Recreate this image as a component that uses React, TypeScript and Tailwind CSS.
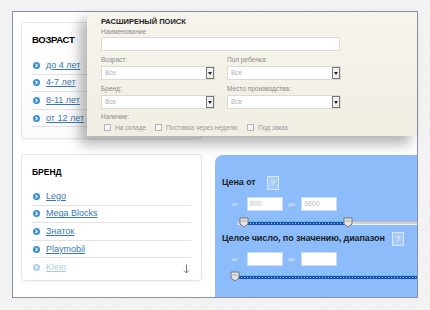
import React from "react";

const font = { fontFamily: '"Liberation Sans", Arial, sans-serif' };

function Bullet() {
  return (
    <svg width="7" height="7" viewBox="0 0 7 7">
      <circle cx="3.5" cy="3.5" r="3.5" fill="#3b8fd3" />
      <path d="M2.6 1.9 L4.3 3.5 L2.6 5.1" stroke="#fff" strokeWidth="1.1" fill="none" />
    </svg>
  );
}

function LinkRow({ text, faded, last }: { text: string; faded?: boolean; last?: boolean }) {
  return (
    <div
      className={`flex items-center h-[17.6px] gap-[6px] pl-[1px] ${last ? "" : "border-b border-[#e2e2e2]"} ${faded ? "opacity-40" : ""}`}
    >
      <Bullet />
      <span className="text-[9px] text-[#3a78b5] underline leading-none">{text}</span>
    </div>
  );
}

function Select({ w }: { w: string }) {
  return (
    <div className={`${w} h-[14px] bg-white border border-[#dcdad2] flex items-center justify-between`}>
      <span className="text-[6.5px] text-[#b0b0b0] pl-[3px]">Все</span>
      <div className="w-[8px] h-[12px] bg-[#f0f0f0] border border-[#777] flex items-center justify-center">
        <svg width="4" height="3" viewBox="0 0 4 3">
          <path d="M0 0 H4 L2 3 Z" fill="#222" />
        </svg>
      </div>
    </div>
  );
}

function Check({ label }: { label: string }) {
  return (
    <div className="flex items-center gap-[4px]">
      <div className="w-[7px] h-[7px] border border-[#b5b5b5] bg-[#f6f6f6]" />
      <span className="text-[6.5px] text-[#999]">{label}</span>
    </div>
  );
}

function Thumb({ left }: { left: number }) {
  return (
    <svg
      width="10"
      height="11"
      viewBox="0 0 10 11"
      className="absolute top-[-1px]"
      style={{ left: left - 5 }}
    >
      <path d="M1 1 H9 V7 L5 10 L1 7 Z" fill="#e4e4e4" stroke="#777" strokeWidth="1" />
      <path d="M2.5 4 H7.5" stroke="#999" strokeWidth="0.8" />
    </svg>
  );
}

function Slider({ start, a, b }: { start: number; a: number; b: number }) {
  return (
    <div className="relative h-[10px]">
      <div
        className="absolute top-[3px] h-[4px] right-[-40px] bg-[#d2d2d2] border-t border-b border-t-[#b9b9b9] border-b-[#eeeeee] rounded-l-[2px]"
        style={{ left: start }}
      />
      <div
        className="absolute top-[3px] h-[4px] bg-[#1f4fb5] border-t border-[#63c0d8]"
        style={{ left: a, width: b - a }}
      >
        <div className="h-[1px] mt-[1px] bg-[repeating-linear-gradient(90deg,#7fd0e6_0,#7fd0e6_1px,transparent_1px,transparent_3px)]" />
      </div>
      <Thumb left={a} />
      {b < 190 && <Thumb left={b} />}
    </div>
  );
}

function RangeInputs({ from, to }: { from: string; to: string }) {
  return (
    <div className="flex items-center h-[14px] pl-[10px]">
      <span className="text-[6px] text-[#e6effc] w-[15px]">от</span>
      <div className="w-[36px] h-[14px] bg-white border border-[#c9dcf5] flex items-center pl-[2px]">
        <span className="text-[7px] text-[#bbb]">{from}</span>
      </div>
      <span className="text-[6px] text-[#e6effc] w-[18px] pl-[5px]">до</span>
      <div className="w-[36px] h-[14px] bg-white border border-[#c9dcf5] flex items-center pl-[2px]">
        <span className="text-[7px] text-[#bbb]">{to}</span>
      </div>
    </div>
  );
}

function Help() {
  return (
    <div className="w-[12px] h-[14px] border border-[#d8e8ff] bg-[#a6cbfb] flex items-center justify-center">
      <span className="text-[8px] text-white leading-none">?</span>
    </div>
  );
}

export default function App() {
  return (
    <div
      className="w-[430px] h-[310px] overflow-hidden bg-[repeating-linear-gradient(135deg,#f4f4f4_0,#f4f4f4_2px,#efefef_2px,#efefef_3px)] pt-[11px] pl-[12px]"
      style={font}
    >
      <div className="relative w-[406px] h-[287px] border border-[#8a8fae] bg-white flex">
        {/* Left column */}
        <div className="flex flex-col pl-[8px] pt-[10px] gap-[15px] w-[189px]">
          <div className="h-[117px] rounded-[4px] border border-[#e6e6e6] bg-[linear-gradient(#ffffff,#fbfbfb)] shadow-[0_1px_2px_rgba(0,0,0,0.06)] px-[10px] pt-[11px]">
            <div className="text-[9.5px] font-bold text-black leading-[12px] tracking-[-0.3px]">ВОЗРАСТ</div>
            <div className="mt-[11px] w-[159px]">
              <LinkRow text="до 4 лет" />
              <LinkRow text="4-7 лет" />
              <LinkRow text="8-11 лет" />
              <LinkRow text="от 12 лет" />
            </div>
          </div>
          <div className="relative h-[127px] rounded-[4px] border border-[#e6e6e6] bg-white shadow-[0_1px_2px_rgba(0,0,0,0.06)] px-[10px] pt-[11px]">
            <div className="text-[8.5px] font-bold text-black leading-[12px]">БРЕНД</div>
            <div className="mt-[10px] w-[159px]">
              <LinkRow text="Lego" />
              <LinkRow text="Mega Blocks" />
              <LinkRow text="Знаток" />
              <LinkRow text="Playmobil" />
              <LinkRow text="Klein" faded last />
            </div>
            <svg
              width="7"
              height="10"
              viewBox="0 0 7 10"
              className="absolute right-[11px] bottom-[6px]"
            >
              <path d="M3.5 0.5 V9 M1 6.5 L3.5 9 L6 6.5" stroke="#7a7a7a" strokeWidth="1" fill="none" />
            </svg>
          </div>
        </div>

        {/* Right column */}
        <div className="flex-1 flex flex-col justify-end pl-[13px]">
          <div className="h-[142px] rounded-tl-[8px] bg-[#8dbcfa] overflow-hidden flex flex-col pl-[7px] pt-[21px]">
            <div className="flex items-center h-[14px] gap-[11px]">
              <span className="text-[9px] font-bold text-[#1a1d2a] tracking-[-0.1px]">Цена от</span>
              <Help />
            </div>
            <div className="mt-[7px]">
              <RangeInputs from="800" to="9600" />
            </div>
            <div className="mt-[7px]">
              <Slider start={15} a={22} b={126} />
            </div>
            <div className="flex items-center h-[14px] mt-[4px]">
              <span className="text-[9px] font-bold text-[#1a1d2a] w-[170px] tracking-[-0.1px]">
                Целое число, по значению, диапазон
              </span>
              <Help />
            </div>
            <div className="mt-[6px]">
              <RangeInputs from="" to="" />
            </div>
            <div className="mt-[6px]">
              <Slider start={9} a={13} b={220} />
            </div>
          </div>
        </div>

        {/* Advanced search popup */}
        <div className="absolute left-[74px] top-0 w-[330px] h-[124px] bg-[linear-gradient(#f6f4ec,#f1eee4)] shadow-[-7px_8px_12px_rgba(0,0,0,0.3)] pl-[14px] pt-[5px]">
          <div className="text-[7.5px] font-bold text-[#222] leading-[9px]">РАСШИРЕНЫЙ ПОИСК</div>
          <div className="text-[6.5px] text-[#8a8a8a] leading-[8px] mt-[2px]">Наименование</div>
          <div className="w-[239px] h-[14px] bg-white border border-[#dddad0] rounded-[1px] mt-[1px]" />
          <div className="flex gap-[12px] mt-[5px]">
            <div className="flex flex-col">
              <div className="text-[6.5px] text-[#8a8a8a] leading-[8px] mb-[2px]">Возраст:</div>
              <Select w="w-[114px]" />
            </div>
            <div className="flex flex-col">
              <div className="text-[6.5px] text-[#8a8a8a] leading-[8px] mb-[2px]">Пол ребенка:</div>
              <Select w="w-[114px]" />
            </div>
          </div>
          <div className="flex gap-[12px] mt-[5px]">
            <div className="flex flex-col">
              <div className="text-[6.5px] text-[#8a8a8a] leading-[8px] mb-[2px]">Бренд:</div>
              <Select w="w-[114px]" />
            </div>
            <div className="flex flex-col">
              <div className="text-[6.5px] text-[#8a8a8a] leading-[8px] mb-[2px]">Место производства:</div>
              <Select w="w-[114px]" />
            </div>
          </div>
          <div className="text-[6.5px] text-[#8a8a8a] leading-[8px] mt-[4px]">Наличие:</div>
          <div className="flex items-center mt-[2px] pl-[3px]">
            <div className="w-[51px]"><Check label="На складе" /></div>
            <div className="w-[92px]"><Check label="Поставка через неделю" /></div>
            <Check label="Под заказ" />
          </div>
        </div>
      </div>
    </div>
  );
}
